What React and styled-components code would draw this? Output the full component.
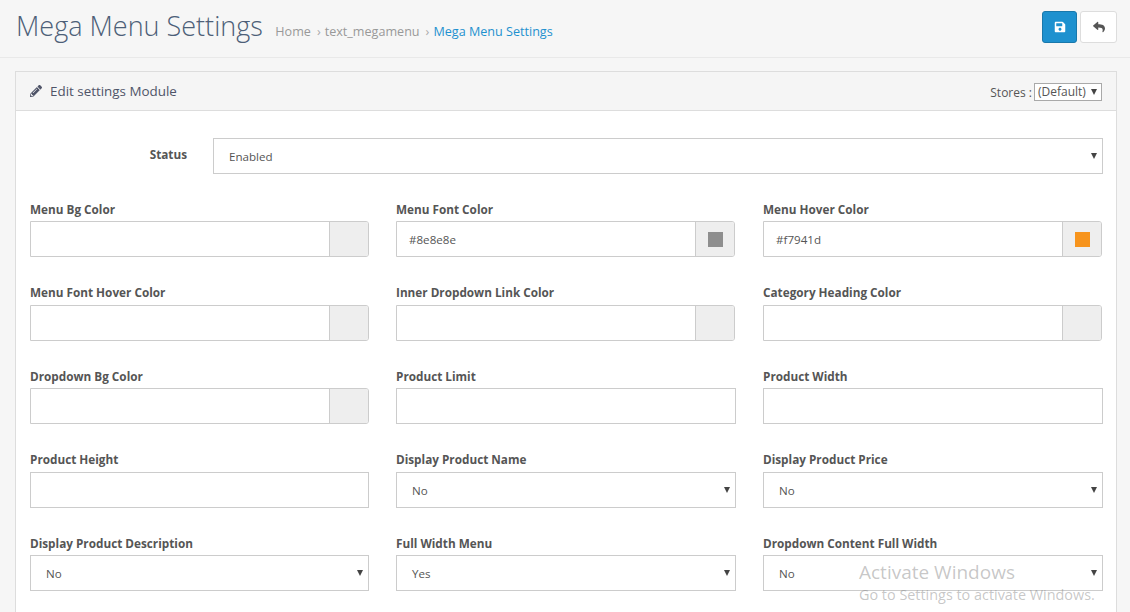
import React from "react";
import styled, { createGlobalStyle } from "styled-components";
import { FaPencilAlt, FaSave, FaReply } from "react-icons/fa";

const Global = createGlobalStyle`
  html, body { margin: 0; padding: 0; background: #f6f6f6; overflow: hidden; }
  body { font-family: "Open Sans", "Liberation Sans", sans-serif; font-size: 12px; color: #666; }
  * { box-sizing: border-box; }
`;

const Page = styled.div`
  position: relative;
  width: 1130px;
  height: 612px;
  overflow: hidden;
`;
const Header = styled.header`
  display: flex;
  align-items: flex-start;
  justify-content: space-between;
  height: 58px;
  padding: 0 13px 0 16px;
  border-bottom: 1px solid #e9e9e9;
`;
const TitleGroup = styled.div`
  display: flex;
  align-items: baseline;
  padding-top: 7px;
`;
const Title = styled.h1`
  margin: 0;
  font-size: 27px;
  font-weight: 300;
  line-height: 38px;
  color: #4d5f78;
`;
const Crumbs = styled.ol`
  display: flex;
  align-items: baseline;
  list-style: none;
  margin: 0 0 0 12.5px;
  padding: 0;
  font-size: 12.6px;
  color: #999;
`;
const Crumb = styled.li`
  color: ${(p) => (p.$active ? "#1e91cf" : "#999")};
  &:not(:first-child)::before {
    content: "›";
    color: #aaa;
    padding: 0 4px 0 6px;
  }
`;
const Actions = styled.div`
  display: flex;
  gap: 3px;
  padding-top: 11px;
`;
const IconButton = styled.button`
  display: flex;
  align-items: center;
  justify-content: center;
  height: 32px;
  width: ${(p) => (p.$primary ? "35px" : "37px")};
  padding: 0;
  border-radius: 3px;
  border: 1px solid ${(p) => (p.$primary ? "#1978ab" : "#ddd")};
  background: ${(p) => (p.$primary ? "#1e91cf" : "#fff")};
  color: ${(p) => (p.$primary ? "#fff" : "#555")};
  font-size: 12px;
`;
const Panel = styled.section`
  margin: 13px 13px 0 15px;
  border: 1px solid #ddd;
  background: #fff;
`;
const PanelHeading = styled.div`
  display: flex;
  align-items: center;
  justify-content: space-between;
  height: 39px;
  padding: 0 14px 0 14px;
  background: #f5f5f5;
  border-bottom: 1px solid #ddd;
`;
const PanelTitle = styled.h3`
  display: flex;
  align-items: center;
  gap: 8px;
  margin: 0 0 1px;
  font-size: 13.4px;
  font-weight: 400;
  color: #4f5468;
`;
const StoreSwitch = styled.div`
  display: flex;
  align-items: center;
  gap: 2px;
  margin-top: 2px;
  font-size: 12px;
  color: #555;
`;
const MiniSelectWrap = styled.div`
  position: relative;
  width: 68px;
  height: 18px;
  border: 1px solid #a9a9a9;
  background: #fff;
  padding-left: 3px;
  line-height: 16px;
  font-size: 12px;
  color: #555;
  &::after {
    content: "";
    position: absolute;
    right: 4px;
    top: 5px;
    border-left: 3.5px solid transparent;
    border-right: 3.5px solid transparent;
    border-top: 6px solid #444;
  }
`;
const PanelBody = styled.div`
  padding: 27px 14px 0 14px;
`;
const StatusRow = styled.div`
  display: flex;
  align-items: flex-start;
  margin-bottom: 30px;
`;
const StatusLabel = styled.label`
  width: 157px;
  padding-top: 9px;
  text-align: right;
  font-size: 11.75px;
  line-height: 15px;
  font-weight: 700;
  color: #555;
`;
const StatusControl = styled.div`
  flex: 1;
  margin-left: 26px;
  margin-right: -1px;
`;
const Grid = styled.div`
  display: grid;
  grid-template-columns: 339px 340px 340px;
  column-gap: 27px;
  grid-auto-rows: 83.5px;
`;
const Field = styled.div`
  display: flex;
  flex-direction: column;
`;
const FieldLabel = styled.label`
  display: block;
  height: 11px;
  line-height: 11px;
  margin: -0.3px 0 6.3px;
  font-size: 11.75px;
  font-weight: 700;
  color: #555;
`;
const SelectBox = styled.div`
  position: relative;
  height: 36px;
  border: 1px solid #ccc;
  background: #fff;
  padding-left: 15px;
  line-height: 35px;
  font-size: 11.6px;
  color: #555;
  &::after {
    content: "";
    position: absolute;
    right: 5px;
    top: 14px;
    border-left: 3px solid transparent;
    border-right: 3px solid transparent;
    border-top: 6px solid #444;
  }
`;
const TextBox = styled.div`
  height: 36px;
  border: 1px solid #ccc;
  background: #fff;
`;
const ColorGroup = styled.div`
  display: flex;
  width: calc(100% - ${(p) => (p.$inset ? "1px" : "0px")});
  height: 36px;
  border: 1px solid #ccc;
  border-radius: 0 3px 3px 0;
  overflow: hidden;
`;
const ColorValue = styled.div`
  flex: 1;
  padding-left: 12px;
  line-height: 35px;
  font-size: 11.6px;
  color: #555;
  background: #fff;
`;
const ColorAddon = styled.div`
  display: flex;
  align-items: center;
  justify-content: center;
  width: 39px;
  background: #eee;
  border-left: 1px solid #ccc;
`;
const Swatch = styled.i`
  display: block;
  width: 15px;
  height: 15px;
  background: ${(p) => p.$color};
`;
const Watermark = styled.div`
  position: absolute;
  left: 859px;
  top: 560px;
  color: rgba(120, 120, 120, 0.42);
  pointer-events: none;
`;
const WatermarkTitle = styled.div`
  font-size: 19px;
  line-height: 24px;
`;
const WatermarkText = styled.div`
  font-size: 14.4px;
  line-height: 21px;
`;

const fields = [
  { label: "Menu Bg Color", kind: "color" },
  { label: "Menu Font Color", kind: "color", value: "#8e8e8e" },
  { label: "Menu Hover Color", kind: "color", value: "#f7941d" },
  { label: "Menu Font Hover Color", kind: "color" },
  { label: "Inner Dropdown Link Color", kind: "color" },
  { label: "Category Heading Color", kind: "color" },
  { label: "Dropdown Bg Color", kind: "color" },
  { label: "Product Limit", kind: "text" },
  { label: "Product Width", kind: "text" },
  { label: "Product Height", kind: "text" },
  { label: "Display Product Name", kind: "select", value: "No" },
  { label: "Display Product Price", kind: "select", value: "No" },
  { label: "Display Product Description", kind: "select", value: "No" },
  { label: "Full Width Menu", kind: "select", value: "Yes" },
  { label: "Dropdown Content Full Width", kind: "select", value: "No" },
];

function Control({ field, column }) {
  if (field.kind === "select") return <SelectBox>{field.value}</SelectBox>;
  if (field.kind === "text") return <TextBox />;
  return (
    <ColorGroup $inset={column > 0}>
      <ColorValue>{field.value}</ColorValue>
      <ColorAddon>{field.value && <Swatch $color={field.value} />}</ColorAddon>
    </ColorGroup>
  );
}

export default function App() {
  return (
    <Page>
      <Global />
      <Header>
        <TitleGroup>
          <Title>Mega Menu Settings</Title>
          <Crumbs>
            <Crumb>Home</Crumb>
            <Crumb>text_megamenu</Crumb>
            <Crumb $active>Mega Menu Settings</Crumb>
          </Crumbs>
        </TitleGroup>
        <Actions>
          <IconButton $primary aria-label="Save"><FaSave /></IconButton>
          <IconButton aria-label="Back"><FaReply /></IconButton>
        </Actions>
      </Header>
      <Panel>
        <PanelHeading>
          <PanelTitle><FaPencilAlt size={12} />Edit settings Module</PanelTitle>
          <StoreSwitch>
            Stores :
            <MiniSelectWrap>(Default)</MiniSelectWrap>
          </StoreSwitch>
        </PanelHeading>
        <PanelBody>
          <StatusRow>
            <StatusLabel>Status</StatusLabel>
            <StatusControl><SelectBox>Enabled</SelectBox></StatusControl>
          </StatusRow>
          <Grid>
            {fields.map((f, i) => (
              <Field key={f.label}>
                <FieldLabel>{f.label}</FieldLabel>
                <Control field={f} column={i % 3} />
              </Field>
            ))}
          </Grid>
        </PanelBody>
      </Panel>
      <Watermark>
        <WatermarkTitle>Activate Windows</WatermarkTitle>
        <WatermarkText>Go to Settings to activate Windows.</WatermarkText>
      </Watermark>
    </Page>
  );
}
